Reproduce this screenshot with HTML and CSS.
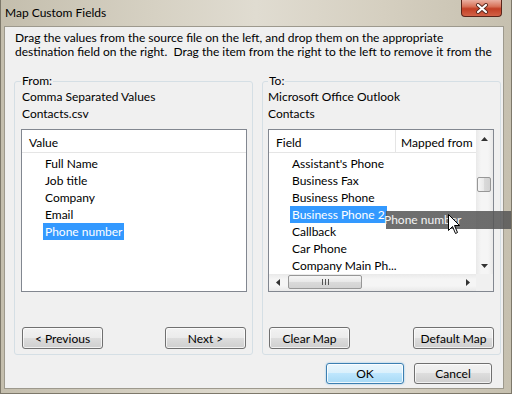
FILE: index.html
```html
<!DOCTYPE html>
<html lang="en">
<head>
    <meta charset="UTF-8">
    <title>Map Custom Fields</title>
    <link rel="stylesheet" href="styles.css">
</head>
<body>
  <div class="window">
    <div class="titlebar">
      <span class="title">Map Custom Fields</span>
      <div class="close-btn">
        <svg width="16" height="11" viewBox="0 0 16 11">
          <path d="M4 2 L12 9 M12 2 L4 9" stroke="#5a2a20" stroke-width="4" stroke-linecap="round"/>
          <path d="M4 2 L12 9 M12 2 L4 9" stroke="#ffffff" stroke-width="2.2" stroke-linecap="round"/>
        </svg>
      </div>
    </div>

    <div class="client">
      <p class="intro">Drag the values from the source file on the left, and drop them on the appropriate<br>destination field on the right.&nbsp; Drag the item from the right to the left to remove it from the</p>

      <div class="panels">
        <fieldset class="group group-from">
          <legend>From:</legend>
          <div class="source">Comma Separated Values</div>
          <div class="source">Contacts.csv</div>
          <div class="listbox">
            <div class="list-header">
              <div class="col">Value</div>
            </div>
            <ul class="items">
              <li><span>Full Name</span></li>
              <li><span>Job title</span></li>
              <li><span>Company</span></li>
              <li><span>Email</span></li>
              <li><span class="selected">Phone number</span></li>
            </ul>
          </div>
          <div class="group-buttons">
            <button class="btn">&lt; Previous</button>
            <button class="btn">Next &gt;</button>
          </div>
        </fieldset>

        <fieldset class="group group-to">
          <legend>To:</legend>
          <div class="source">Microsoft Office Outlook</div>
          <div class="source">Contacts</div>
          <div class="listbox listbox-grid">
            <div class="list-area">
              <div class="list-header">
                <div class="col col-field">Field</div>
                <div class="col col-mapped">Mapped from</div>
              </div>
              <ul class="items">
                <li><span>Assistant's Phone</span></li>
                <li><span>Business Fax</span></li>
                <li><span>Business Phone</span></li>
                <li><span class="selected">Business Phone 2</span></li>
                <li><span>Callback</span></li>
                <li><span>Car Phone</span></li>
                <li><span>Company Main Ph...</span></li>
              </ul>
            </div>
            <div class="vscroll">
              <div class="arrow">
                <svg width="7" height="4" viewBox="0 0 7 4"><polygon points="0,4 7,4 3.5,0" fill="#333"/></svg>
              </div>
              <div class="vtrack">
                <div class="vthumb"></div>
              </div>
              <div class="arrow">
                <svg width="7" height="4" viewBox="0 0 7 4"><polygon points="0,0 7,0 3.5,4" fill="#333"/></svg>
              </div>
            </div>
            <div class="hscroll">
              <div class="arrow">
                <svg width="4" height="7" viewBox="0 0 4 7"><polygon points="4,0 4,7 0,3.5" fill="#333"/></svg>
              </div>
              <div class="htrack">
                <div class="hthumb">
                  <svg width="7" height="6" viewBox="0 0 7 6">
                    <rect x="0" y="0" width="1" height="6" fill="#555"/>
                    <rect x="3" y="0" width="1" height="6" fill="#555"/>
                    <rect x="6" y="0" width="1" height="6" fill="#555"/>
                  </svg>
                </div>
              </div>
              <div class="arrow">
                <svg width="4" height="7" viewBox="0 0 4 7"><polygon points="0,0 0,7 4,3.5" fill="#333"/></svg>
              </div>
            </div>
            <div class="corner"></div>
          </div>
          <div class="group-buttons">
            <button class="btn">Clear Map</button>
            <button class="btn">Default Map</button>
          </div>
        </fieldset>
      </div>

      <div class="dialog-buttons">
        <button class="btn btn-default">OK</button>
        <button class="btn">Cancel</button>
      </div>
    </div>

    <!-- item being dragged from the left list -->
    <div class="drag-ghost">Phone number</div>
    <svg class="cursor" width="13" height="21" viewBox="0 0 13 21">
      <path d="M0.5 0.5 L0.5 16.5 L4.5 12.5 L7.5 19.5 L9.5 18.5 L6.5 11.5 L11.5 11.5 Z" fill="#fff" stroke="#000" stroke-width="1"/>
    </svg>
  </div>
</body>
</html>
```

FILE: styles.css
```css
* {
    box-sizing: border-box;
}

body {
    margin: 0;
    width: 512px;
    height: 394px;
    overflow: hidden;
    font-family: Lato, "Open Sans", sans-serif;
    font-size: 12px;
    color: #000;
    background: #cdc7b6;
}

.window {
    position: relative;
    width: 512px;
    height: 394px;
    display: flex;
    flex-direction: column;
    overflow: hidden;
    border: 1px solid #7d786a;
    border-top: none;
    background: linear-gradient(to right, #c4bead 0%, #d6d1c3 30%, #e0dcd1 50%, #d5cfc0 75%, #c6c0af 100%);
}

.titlebar {
    height: 26px;
    display: flex;
    align-items: flex-start;
    justify-content: space-between;
    flex-shrink: 0;
}

.title {
    padding: 5px 0 0 4px;
    line-height: 15px;
}

.close-btn {
    width: 41px;
    height: 17px;
    margin-right: 9px;
    border: 1px solid #5a2419;
    border-top: none;
    border-radius: 0 0 4px 4px;
    background: linear-gradient(#eab0a2, #d8735a 40%, #c23f25 55%, #d26247);
    display: flex;
    align-items: center;
    justify-content: center;
}

.close-btn svg {
    display: block;
}

.client {
    flex: 1;
    margin: 0 7px 4px 3px;
    background: #f0f0f0;
    border: 1px solid #9d998d;
    display: flex;
    flex-direction: column;
}

.intro {
    margin: 0;
    padding: 4px 0 0 10px;
    height: 32px;
    line-height: 14px;
    white-space: nowrap;
    overflow: hidden;
}

.panels {
    display: flex;
    gap: 9px;
    padding-left: 9px;
    margin-top: 15px;
}

.group {
    margin: 0;
    width: 239px;
    min-width: 0;
    border: 1px solid #d5dfe5;
    border-radius: 3px;
    padding: 0 4px 5px 6px;
}

.group-to {
    padding: 0 6px 5px 5px;
}

.group legend {
    padding: 0 1px;
    line-height: 14px;
}

.source {
    line-height: 17px;
    padding-left: 1px;
}

.group-to .source {
    padding-left: 0;
}

.listbox {
    margin-top: 7px;
    width: 226px;
    height: 163px;
    border: 1px solid #828790;
    background: #fff;
    overflow: hidden;
}

.listbox-grid {
    display: grid;
    grid-template-columns: 1fr 17px;
    grid-template-rows: 1fr 17px;
}

.list-area {
    overflow: hidden;
}

.list-header {
    display: flex;
    height: 23px;
    border-bottom: 1px solid #e5e5e5;
}

.col {
    padding: 3px 0 0 7px;
    line-height: 19px;
    white-space: nowrap;
}

.col-field {
    width: 127px;
    flex-shrink: 0;
    border-right: 1px solid #e5e5e5;
}

.col-mapped {
    padding-left: 5px;
}

.items {
    list-style: none;
    margin: 2px 0 0;
    padding: 0;
}

.items li {
    height: 17px;
    line-height: 17px;
    padding-left: 21px;
    white-space: nowrap;
}

.items span {
    display: inline-block;
    padding: 0 2px;
}

.items .selected {
    background: #3399ff;
    color: #fff;
}

.vscroll {
    grid-row: 1;
    grid-column: 2;
    display: flex;
    flex-direction: column;
    background: linear-gradient(to right, #e9e9e9, #f5f5f5 30%, #f5f5f5 70%, #e9e9e9);
}

.arrow {
    width: 17px;
    height: 17px;
    flex-shrink: 0;
    display: flex;
    align-items: center;
    justify-content: center;
}

.arrow svg {
    display: block;
}

.vtrack {
    flex: 1;
    padding: 30px 2px 0 1px;
}

.vthumb {
    height: 15px;
    border: 1px solid #979797;
    border-radius: 2px;
    background: linear-gradient(to right, #f6f6f6, #e8e8e8 50%, #dadada 50%, #d2d2d2);
}

.hscroll {
    grid-row: 2;
    grid-column: 1;
    display: flex;
    background: linear-gradient(#e9e9e9, #f5f5f5 30%, #f5f5f5 70%, #e9e9e9);
}

.htrack {
    flex: 1;
    padding: 1px 0 2px 2px;
}

.hthumb {
    width: 74px;
    height: 100%;
    border: 1px solid #979797;
    border-radius: 2px;
    background: linear-gradient(#f6f6f6, #e8e8e8 50%, #dadada 50%, #d2d2d2);
    display: flex;
    align-items: center;
    justify-content: center;
}

.corner {
    grid-row: 2;
    grid-column: 2;
    background: #f0f0f0;
}

.group-buttons {
    display: flex;
    justify-content: space-between;
    margin-top: 35px;
    padding: 0 2px 0 1px;
}

.group-to .group-buttons {
    padding: 0 0 0 1px;
}

.btn {
    width: 81px;
    height: 22px;
    padding: 0;
    font: inherit;
    color: #000;
    border: 1px solid #707070;
    border-radius: 3px;
    background: linear-gradient(#f2f2f2, #ebebeb 50%, #dddddd 50%, #cfcfcf);
    box-shadow: inset 0 0 0 1px rgba(255, 255, 255, 0.7);
}

.dialog-buttons {
    display: flex;
    justify-content: flex-end;
    gap: 10px;
    margin-top: 8px;
    padding-right: 11px;
}

.dialog-buttons .btn {
    width: 78px;
    height: 21px;
}

.btn-default {
    border-color: #3c7fb1;
    background: linear-gradient(#eaf6fd, #d9f0fc 50%, #bee6fd 50%, #a7d9f5);
    box-shadow: inset 0 0 0 1px rgba(255, 255, 255, 0.8), 0 0 2px rgba(60, 160, 230, 0.6);
}

.drag-ghost {
    position: absolute;
    left: 382px;
    top: 211px;
    width: 140px;
    height: 18px;
    line-height: 18px;
    padding-left: 1px;
    color: #f4f4f4;
    white-space: nowrap;
    background: linear-gradient(to right, transparent 3px, rgba(85, 85, 85, 0.85) 3px);
}

.cursor {
    position: absolute;
    left: 447px;
    top: 214px;
}
```
